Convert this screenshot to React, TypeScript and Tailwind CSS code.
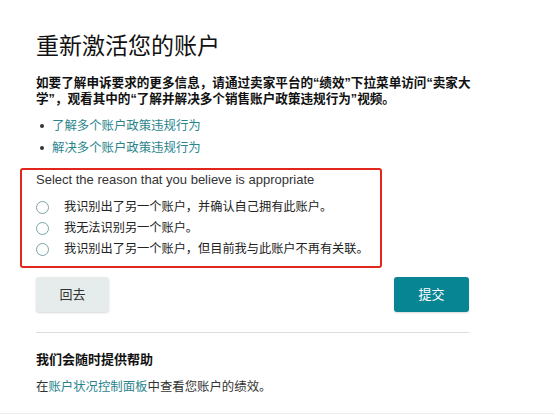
const reasons = [
  "我识别出了另一个账户，并确认自己拥有此账户。",
  "我无法识别另一个账户。",
  "我识别出了另一个账户，但目前我与此账户不再有关联。",
];

const links = ["了解多个账户政策违规行为", "解决多个账户政策违规行为"];

export default function App() {
  return (
    <div className="h-[419px] w-full overflow-hidden bg-white font-['Liberation_Sans','Noto_Sans_CJK_SC',sans-serif] text-[#333]">
      <div className="w-[469px] pl-[36px] pt-[32px]">
        <h1 className="text-[23px] font-normal leading-[28px] text-[#111]">重新激活您的账户</h1>

        <p className="mt-[15px] w-[440px] text-[12.6px] font-bold leading-[16px] text-[#111]">
          如要了解申诉要求的更多信息，请通过卖家平台的“绩效”下拉菜单访问“卖家大学”，观看其中的“了解并解决多个销售账户政策违规行为”视频。
        </p>

        <ul className="mt-[8px]">
          {links.map((l) => (
            <li key={l} className="flex h-[22px] items-center">
              <span className="ml-[4px] h-[4px] w-[4px] rounded-full bg-[#333]" />
              <a className="ml-[8px] text-[12.4px] text-[#2a848c]">{l}</a>
            </li>
          ))}
        </ul>

        <div className="-ml-[16px] mt-[9px] w-[362px] rounded-[3px] border-2 border-[#e0261d] pb-[6px] pl-[14px] pt-[1px]">
          <div className="text-[13px] leading-[18px] text-[#333]">
            Select the reason that you believe is appropriate
          </div>
          <div className="mt-[8px]">
            {reasons.map((r) => (
              <label key={r} className="flex h-[21px] items-center">
                <span className="h-[13px] w-[13px] rounded-full border border-[#7aa3a8] bg-white" />
                <span className="ml-[15px] text-[12.2px] text-[#222]">{r}</span>
              </label>
            ))}
          </div>
        </div>

        <div className="mt-[9px] flex justify-between">
          <button className="h-[35px] w-[73px] rounded-[3px] bg-[#e6ebec] text-[13px] text-[#333] shadow-[0_1px_2px_rgba(0,0,0,0.15)]">
            回去
          </button>
          <button className="h-[35px] w-[75px] rounded-[3px] bg-[#088593] text-[13px] text-white shadow-[0_1px_2px_rgba(0,0,0,0.15)]">
            提交
          </button>
        </div>

        <div className="mt-[20px] h-px bg-[#ddd]" />

        <h2 className="mt-[18px] text-[13px] font-bold leading-[18px] text-[#111]">我们会随时提供帮助</h2>
        <p className="mt-[9px] text-[12.4px] leading-[18px] text-[#333]">
          在<a className="text-[#2a848c]">账户状况控制面板</a>中查看您账户的绩效。
        </p>
      </div>
      <div className="mt-[17px] h-px w-full bg-[#eee]" />
    </div>
  );
}
